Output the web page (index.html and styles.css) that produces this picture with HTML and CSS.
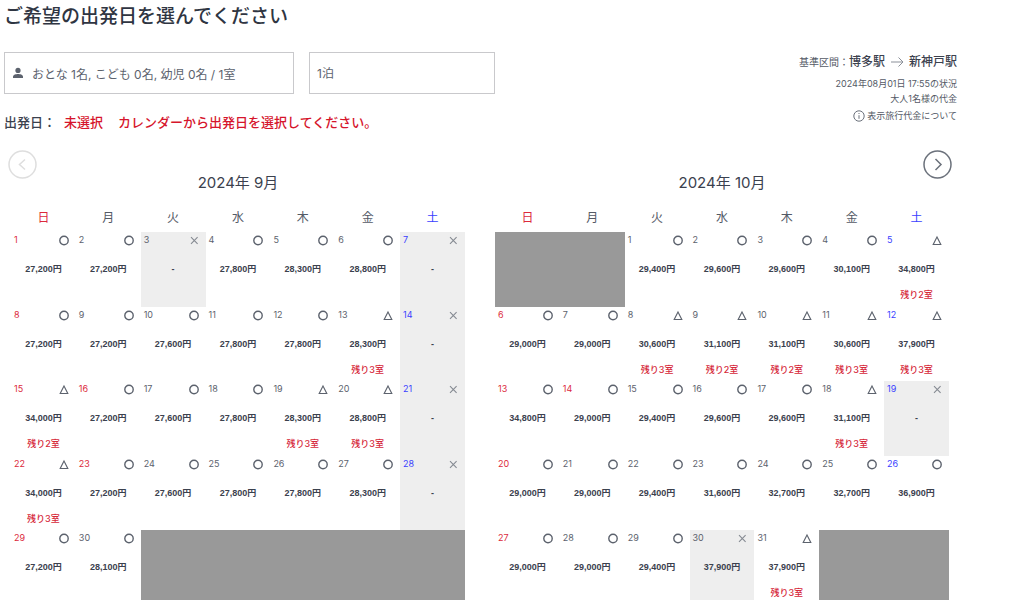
FILE: index.html
```html
<!DOCTYPE html>
<html lang="ja">
<head>
<meta charset="utf-8">
<meta name="viewport" content="width=device-width, initial-scale=1">
<title>出発日の選択</title>
<link rel="stylesheet" href="styles.css">
</head>
<body>
<main class="page">
  <h1 class="page-title">ご希望の出発日を選んでください</h1>
  <div class="top">
    <div class="conditions">
      <div class="fields">
        <button type="button" class="field field-guests">
          <svg class="person" viewBox="0 0 12 12" aria-hidden="true"><circle cx="6" cy="3.4" r="2.6"/><path d="M1 11V9.6C1 7.8 4 7 6 7s5 .8 5 2.6V11z"/></svg>
          <span>おとな 1名, こども 0名, 幼児 0名 / 1室</span>
        </button>
        <select class="field field-nights" aria-label="泊数"><option>1泊</option></select>
      </div>
      <p class="departure"><span>出発日：</span><strong class="alert">未選択</strong><span class="alert hint">カレンダーから出発日を選択してください。</span></p>
    </div>
    <div class="summary">
      <p class="route"><span class="route-label">基準区間：</span><span>博多駅</span><svg class="arrow" viewBox="0 0 14 12" aria-hidden="true"><path d="M1 6h12M8.5 1.5 13 6l-4.500 4.500"/></svg><span>新神戸駅</span></p>
      <p class="note">2024年08月01日 17:55の状況</p>
      <p class="note">大人1名様の代金</p>
      <a class="about" href="#about"><svg class="info" viewBox="0 0 12 12" aria-hidden="true"><circle cx="6" cy="6" r="5.200"/><path d="M6 5.200v3.600M6 3v1"/></svg>表示旅行代金について</a>
    </div>
  </div>
  <nav class="pager" aria-label="月の移動">
    <button type="button" class="turn" aria-label="前の月" disabled><svg viewBox="0 0 29 29"><circle cx="14.500" cy="14.500" r="13.500"/><path d="M17 9.500l-5.500 5 5.500 5"/></svg></button>
    <button type="button" class="turn" aria-label="次の月"><svg viewBox="0 0 29 29"><circle cx="14.500" cy="14.500" r="13.500"/><path d="M12.500 9l5.500 5.500-5.500 5.500"/></svg></button>
  </nav>
  <div class="months" id="months"></div>
</main>
<script src="calendar.js"></script>
</body>
</html>
```
FILE: styles.css
```css
* { box-sizing: border-box; }

body {
  margin: 0;
  background: #fff;
  color: #3b414e;
  font-family: Inter, "Noto Sans CJK JP", sans-serif;
  font-size: 12px;
}

h1, h2, p { margin: 0; font-weight: 400; }

button, select { font: inherit; color: inherit; }

.page { padding: 5px 67px 0 4px; }

.page-title {
  font-size: 19px;
  font-weight: 500;
  line-height: 24px;
  color: #2f3542;
}

.top {
  display: flex;
  justify-content: space-between;
  margin-top: 23px;
}

.fields { display: flex; gap: 15px; }

.field {
  height: 42px;
  padding: 0 7px;
  border: 1px solid #c9c9cc;
  border-radius: 0;
  background: #fff;
  color: #5c626d;
  text-align: left;
  appearance: none;
}

.field-guests {
  display: flex;
  align-items: center;
  gap: 8px;
  width: 290px;
}

.field-nights { width: 186px; }

.person { width: 12px; height: 12px; fill: #5c626d; }

.departure {
  display: flex;
  margin-top: 18px;
  font-size: 13px;
  font-weight: 500;
  line-height: 20px;
}

.alert { margin-left: 8px; color: #d6152c; font-weight: 500; }
.hint { margin-left: 15px; }

.summary {
  display: flex;
  flex-direction: column;
  align-items: flex-end;
  color: #545a66;
  font-size: 9px;
  line-height: 15px;
}

.route {
  display: flex;
  align-items: center;
  margin-bottom: 4px;
  color: #3b414e;
  font-size: 12px;
  font-weight: 500;
  line-height: 20px;
}

.route-label { font-size: 10px; font-weight: 400; color: #545a66; }

.arrow { width: 14px; height: 12px; margin: 0 5px; fill: none; stroke: #8b9099; }

.about {
  display: flex;
  align-items: center;
  gap: 2px;
  margin-top: 2px;
  color: inherit;
  text-decoration: none;
}

.info { width: 12px; height: 12px; fill: none; stroke: #6b717b; }

.pager {
  display: flex;
  justify-content: space-between;
  margin: 18px 5px -5px 4px;
}

.turn {
  width: 29px;
  height: 29px;
  padding: 0;
  border: 0;
  background: none;
  color: #6b717b;
}

.turn:disabled { color: #dedede; }

.turn svg { display: block; fill: none; stroke: currentColor; stroke-width: 1.500; }

.months {
  display: grid;
  grid-template-columns: 1fr 1fr;
  gap: 30px;
  padding: 0 8px 0 7px;
}

.month-title {
  font-size: 15px;
  line-height: 18px;
  text-align: center;
}

.calendar {
  width: 100%;
  margin-top: 16px;
  border-collapse: collapse;
  table-layout: fixed;
}

.calendar th, .calendar td { padding: 0; }

.calendar th {
  height: 24px;
  padding-bottom: 4px;
  font-weight: 400;
  line-height: 18px;
  color: #545a66;
}

.calendar td { height: 74px; vertical-align: top; }
.calendar tbody tr:nth-child(odd) td { height: 75px; }
.calendar .closed { background: #eee; }
.calendar .outside { background: #999; }

.day {
  display: block;
  width: 100%;
  padding: 0;
  border: 0;
  background: none;
  font-size: 9px;
  line-height: 16px;
  text-align: center;
}

.day-head {
  display: flex;
  align-items: center;
  justify-content: space-between;
  padding: 0 6px 0 3px;
  color: #5c626d;
}

.mark { width: 11px; height: 11px; fill: none; stroke: #5c626d; stroke-width: 1.400; }
.mark-cross, .mark-triangle { stroke-width: 1.100; }
.mark-cross { stroke: #858a92; }

.price {
  display: block;
  margin-top: 13px;
  font-family: "Liberation Sans", "Noto Sans CJK JP", sans-serif;
  font-weight: 700;
}

.left { display: block; margin-top: 10px; color: #d6283a; font-weight: 500; }

.calendar .sunday { color: #dc2a3c; }
.calendar .saturday { color: #3a3fff; }
```
FILE: calendar.js
```js
// o: available, t: few left, x: closed
const MONTHS = [
  { year: 2024, month: 9, offset: 0, holidays: [16, 23], days: [
    "o27,200", "o27,200", "x", "o27,800", "o28,300", "o28,800", "x",
    "o27,200", "o27,200", "o27,600", "o27,800", "o27,800", "t28,300/3", "x",
    "t34,000/2", "o27,200", "o27,600", "o27,800", "t28,300/3", "t28,800/3", "x",
    "t34,000/3", "o27,200", "o27,600", "o27,800", "o27,800", "o28,300", "x",
    "o27,200", "o28,100"] },
  { year: 2024, month: 10, offset: 2, holidays: [14], days: [
    "o29,400", "o29,600", "o29,600", "o30,100", "t34,800/2",
    "o29,000", "o29,000", "t30,600/3", "t31,100/2", "t31,100/2", "t30,600/3", "t37,900/3",
    "o34,800", "o29,000", "o29,400", "o29,600", "o29,600", "t31,100/3", "x",
    "o29,000", "o29,000", "o29,400", "o31,600", "o32,700", "o32,700", "o36,900",
    "o29,000", "o29,000", "o29,400", "x37,900", "t37,900/3"] }
];

const MARKS = {
  o: '<svg class="mark" viewBox="0 0 11 11"><circle cx="5" cy="5.500" r="4.200"/></svg>',
  t: '<svg class="mark mark-triangle" viewBox="0 0 11 11"><path d="M5 2 8.800 9.500H1.200z"/></svg>',
  x: '<svg class="mark mark-cross" viewBox="0 0 11 11"><path d="M2 2.200l6.600 6.600M8.600 2.200l-6.600 6.600"/></svg>'
};

const tone = (col, holiday) => col === 0 || holiday ? "sunday" : col === 6 ? "saturday" : "";

function cell(m, index) {
  const date = index - m.offset + 1;
  const entry = m.days[date - 1];
  if (!entry) return '<td class="outside"></td>';
  const closed = entry[0] === "x";
  const [price, left] = entry.slice(1).split("/");
  return `<td class="${closed ? "closed" : ""}"><button type="button" class="day"${closed ? " disabled" : ""}>
    <span class="day-head"><span class="${tone(index % 7, m.holidays.includes(date))}">${date}</span>${MARKS[entry[0]]}</span>
    <span class="price">${price ? price + "円" : "-"}</span>
    ${left ? `<span class="left">残り${left}室</span>` : ""}</button></td>`;
}

document.getElementById("months").innerHTML = MONTHS.map(m => {
  const head = [..."日月火水木金土"].map((d, i) => `<th scope="col" class="${tone(i)}">${d}</th>`).join("");
  let rows = "";
  for (let week = 0; week < 5; week++) {
    rows += "<tr>";
    for (let col = 0; col < 7; col++) rows += cell(m, week * 7 + col);
    rows += "</tr>";
  }
  const id = `month-${m.month}`;
  return `<section><h2 class="month-title" id="${id}">${m.year}年 ${m.month}月</h2>
    <table class="calendar" aria-labelledby="${id}"><thead><tr>${head}</tr></thead><tbody>${rows}</tbody></table></section>`;
}).join("");
```
